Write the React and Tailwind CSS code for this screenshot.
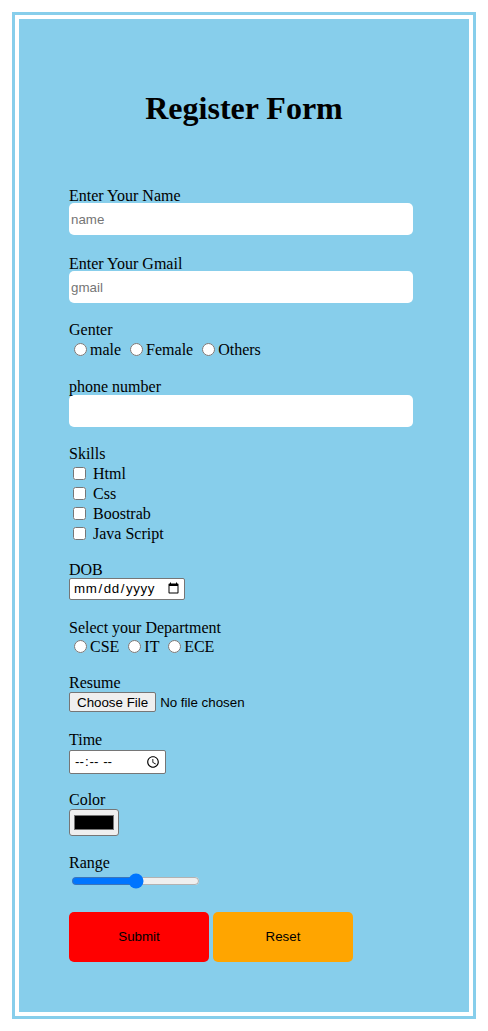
export default function App() {
  const field =
    "block w-[344px] h-[32px] rounded-[5px] bg-white px-[2px] font-['Liberation_Sans',Arial,sans-serif] text-[13.33px] text-black placeholder:text-[#757575] outline-none";
  const lbl = "block h-[17px] leading-[19px]";
  const sans = "font-['Liberation_Sans',Arial,sans-serif] text-[13.33px]";
  return (
    <div className="bg-white min-h-[1031px] pt-[12px] font-['Liberation_Serif','Times_New_Roman',serif] text-[16px] text-black">
      <div className="mx-[12px] border-[3px] border-[#87ceeb] p-[4px]">
        <div className="bg-[#87ceeb] h-[993px] px-[50px] pt-[71px]">
          <h1 className="text-center text-[32px] leading-[37px] font-bold">Register Form</h1>
          <form onSubmit={(e) => e.preventDefault()}>
            <label className={lbl + " mt-[59px]"}>Enter Your Name</label>
            <input type="text" placeholder="name" className={field} />

            <label className={lbl + " mt-[19px]"}>Enter Your Gmail</label>
            <input type="email" placeholder="gmail" className={field} />

            <label className={lbl + " mt-[17px]"}>Genter</label>
            <div className="mt-[3px] h-[18px] leading-[20px] whitespace-nowrap">
              <input type="radio" name="gender" className="align-top mt-[3px] ml-[5px] mr-[3px]" />
              male{" "}
              <input type="radio" name="gender" className="align-top mt-[3px] ml-[5px] mr-[3px]" />
              Female{" "}
              <input type="radio" name="gender" className="align-top mt-[3px] ml-[5px] mr-[3px]" />
              Others
            </div>

            <label className={lbl + " mt-[19px]"}>phone number</label>
            <input type="tel" className={field + " mt-[1px]"} />

            <label className={lbl + " mt-[17px]"}>Skills</label>
            <div className="mt-[2px]">
              {["Html", "Css", "Boostrab", "Java Script"].map((s) => (
                <div key={s} className="h-[20px] leading-[22px] whitespace-nowrap">
                  <input type="checkbox" className="align-top mt-[4px] ml-[4px] mr-[3px]" /> {s}
                </div>
              ))}
            </div>

            <label className={lbl + " mt-[17px]"}>DOB</label>
            <input
              type="date"
              className={
                "block mt-[1px] w-[116px] h-[22px] border border-[#767676] rounded-[2px] bg-white pl-[3px] pr-[2px] tracking-[0.6px] " +
                sans
              }
            />

            <label className={lbl + " mt-[18px]"}>Select your Department</label>
            <div className="mt-[2px] h-[18px] leading-[20px] whitespace-nowrap">
              <input type="radio" name="dept" className="align-top mt-[3px] ml-[5px] mr-[3px]" />
              CSE{" "}
              <input type="radio" name="dept" className="align-top mt-[3px] ml-[5px] mr-[3px]" />
              IT{" "}
              <input type="radio" name="dept" className="align-top mt-[3px] ml-[5px] mr-[3px]" />
              ECE
            </div>

            <label className={lbl + " mt-[18px]"}>Resume</label>
            <input
              type="file"
              className={
                "block mt-[2px] h-[20px] " +
                sans +
                " file:h-[20px] file:px-[7px] file:border file:border-[#767676] file:rounded-[2px] file:bg-[#efefef] file:mr-[4px] file:text-black"
              }
            />

            <label className={lbl + " mt-[18px]"}>Time</label>
            <input
              type="time"
              className={
                "block mt-[3px] w-[97px] h-[24px] border border-[#767676] rounded-[2px] bg-white pl-[4px] pr-[2px] tracking-[3px] " +
                sans
              }
            />

            <label className={lbl + " mt-[16px]"}>Color</label>
            <input
              type="color"
              defaultValue="#000000"
              className="block mt-[2px] w-[50px] h-[27px] border border-[#767676] rounded-[3px] bg-[#efefef] px-[2px] py-[1px]"
            />

            <label className={lbl + " mt-[17px]"}>Range</label>
            <input type="range" className="block mt-[3px] ml-[2px] w-[129px] h-[16px]" />

            <div className="mt-[23px] flex gap-[4px]">
              <button type="submit" className={"w-[140px] h-[50px] rounded-[5px] bg-[#ff0000] text-black " + sans}>
                Submit
              </button>
              <button type="reset" className={"w-[140px] h-[50px] rounded-[5px] bg-[#ffa500] text-black " + sans}>
                Reset
              </button>
            </div>
          </form>
        </div>
      </div>
    </div>
  );
}
